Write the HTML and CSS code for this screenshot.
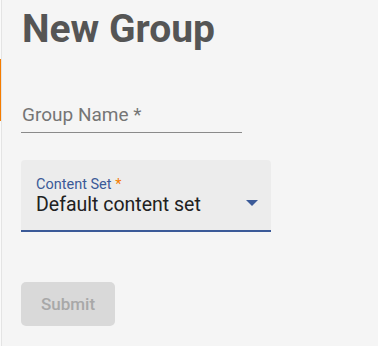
FILE: index.html
```html
<!DOCTYPE html>
<html lang="en">
<head>
    <meta charset="UTF-8">
    <meta name="viewport" content="width=device-width, initial-scale=1.0">
    <title>New Group</title>
    <link rel="stylesheet" href="styles.css">
</head>
<body>
    <div class="page">
        <div class="edge">
            <div class="marker"></div>
        </div>

        <div class="content">
            <h1 class="title">New Group</h1>

            <div class="textField">
                <span class="fieldLabel">Group Name *</span>
            </div>

            <div class="selectField">
                <span class="selectLabel">Content Set <span class="req">*</span></span>
                <div class="selectRow">
                    <span class="selectValue">Default content set</span>
                    <svg class="arrow" width="12" height="6" viewBox="0 0 12 6">
                        <path d="M0 0 L12 0 L6 6 Z" fill="#3b5a98"/>
                    </svg>
                </div>
            </div>

            <button type="button" class="submitBtn" disabled>Submit</button>
        </div>
    </div>
</body>
</html>
```

FILE: styles.css
```css
body {
        margin: 0;
        height: 346px;
        background-color: #f5f5f5;
        font-family: Roboto, "Liberation Sans", sans-serif;
        overflow: hidden;
}

.page {
        display: flex;
        height: 100%;
}

.edge {
        width: 1px;
        background-color: #fafafa;
        border-right: 1px solid #e4e4e4;
        display: flex;
        flex-direction: column;
}

.marker {
        margin-top: 59px;
        height: 62px;
        width: 1px;
        background-color: #f57c00;
}

.content {
        padding-left: 19px;
        display: flex;
        flex-direction: column;
        align-items: flex-start;
}

.title {
        margin: 5px 0 0 1px;
        font-size: 39px;
        font-weight: 700;
        line-height: 48px;
        color: #555555;
}

.textField {
        margin-top: 49px;
        width: 221px;
        height: 31px;
        border-bottom: 1px solid #8a8a8a;
        box-sizing: border-box;
        padding: 2px 0 0 1px;
}

.fieldLabel {
        font-size: 19px;
        line-height: 22px;
        color: #757575;
}

.selectField {
        margin-top: 27px;
        width: 250px;
        height: 72px;
        box-sizing: border-box;
        background-color: #ececec;
        border-radius: 4px 4px 0 0;
        border-bottom: 2px solid #3b5a98;
        padding: 16px 14px 0 15px;
}

.selectLabel {
        display: block;
        font-size: 14.5px;
        line-height: 17px;
        color: #3b5a98;
}

.req {
        color: #f57c00;
}

.selectRow {
        display: flex;
        justify-content: space-between;
        align-items: center;
}

.selectValue {
        font-size: 19.5px;
        line-height: 24px;
        color: #212121;
}

.arrow {
        margin-right: -1px;
        margin-top: -4px;
}

.submitBtn {
        margin-top: 50px;
        width: 94px;
        height: 44px;
        border: none;
        border-radius: 5px;
        background-color: #d9d9d9;
        font-family: Roboto, "Liberation Sans", sans-serif;
        font-size: 17px;
        font-weight: 500;
        color: #a8a8a8;
}
```
